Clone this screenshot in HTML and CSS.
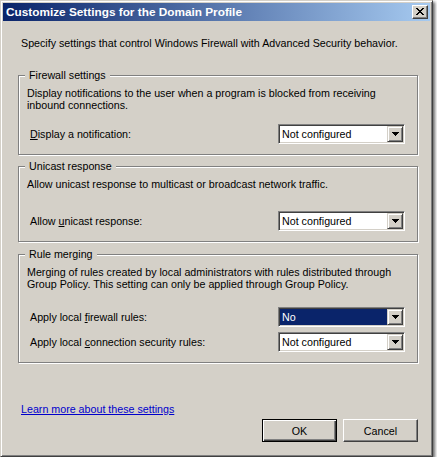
FILE: index.html
```html
<!DOCTYPE html>
<html>
<head>
<meta charset="utf-8">
<title>Customize Settings for the Domain Profile</title>
<link rel="stylesheet" href="styles.css">
</head>
<body>
<div class="window">
  <div class="titlebar">
    <span class="title">Customize Settings for the Domain Profile</span>
    <span class="close"><svg width="8" height="7" viewBox="0 0 8 7" shape-rendering="crispEdges"><path fill="#000" d="M0 0h2v1H0zM6 0h2v1H6zM1 1h2v1H1zM5 1h2v1H5zM2 2h4v1H2zM3 3h2v1H3zM2 4h4v1H2zM1 5h2v1H1zM5 5h2v1H5zM0 6h2v1H0zM6 6h2v1H6z"/></svg></span>
  </div>
  <div class="content">
    <p class="intro">Specify settings that control Windows Firewall with Advanced Security behavior.</p>

    <fieldset class="group g1">
      <legend>Firewall settings</legend>
      <p class="desc">Display notifications to the user when a program is blocked from receiving<br>inbound connections.</p>
      <div class="row r1">
        <span class="label"><u>D</u>isplay a notification:</span>
        <div class="combo"><span class="value">Not configured</span><span class="arrow"><svg width="7" height="4" viewBox="0 0 7 4" shape-rendering="crispEdges"><path fill="#000" d="M0 0h7v1H0zM1 1h5v1H1zM2 2h3v1H2zM3 3h1v1H3z"/></svg></span></div>
      </div>
    </fieldset>

    <fieldset class="group g2">
      <legend>Unicast response</legend>
      <p class="desc">Allow unicast response to multicast or broadcast network traffic.</p>
      <div class="row r2">
        <span class="label">Allow <u>u</u>nicast response:</span>
        <div class="combo"><span class="value">Not configured</span><span class="arrow"><svg width="7" height="4" viewBox="0 0 7 4" shape-rendering="crispEdges"><path fill="#000" d="M0 0h7v1H0zM1 1h5v1H1zM2 2h3v1H2zM3 3h1v1H3z"/></svg></span></div>
      </div>
    </fieldset>

    <fieldset class="group g3">
      <legend>Rule merging</legend>
      <p class="desc">Merging of rules created by local administrators with rules distributed through<br>Group Policy. This setting can only be applied through Group Policy.</p>
      <div class="row r3">
        <span class="label">Apply local <u>f</u>irewall rules:</span>
        <div class="combo"><span class="value selected">No</span><span class="arrow"><svg width="7" height="4" viewBox="0 0 7 4" shape-rendering="crispEdges"><path fill="#000" d="M0 0h7v1H0zM1 1h5v1H1zM2 2h3v1H2zM3 3h1v1H3z"/></svg></span></div>
      </div>
      <div class="row r4">
        <span class="label">Apply local <u>c</u>onnection security rules:</span>
        <div class="combo"><span class="value">Not configured</span><span class="arrow"><svg width="7" height="4" viewBox="0 0 7 4" shape-rendering="crispEdges"><path fill="#000" d="M0 0h7v1H0zM1 1h5v1H1zM2 2h3v1H2zM3 3h1v1H3z"/></svg></span></div>
      </div>
    </fieldset>

    <a class="link" href="#">Learn more about these settings</a>

    <div class="buttons">
      <button class="btn default">OK</button>
      <button class="btn">Cancel</button>
    </div>
  </div>
</div>
</body>
</html>
```
FILE: styles.css
```css
html, body {
  margin: 0;
  padding: 0;
  background: #ffffff;
}

body {
  font-family: "Liberation Sans", Arial, sans-serif;
  font-size: 10.7px;
  color: #000;
}

.window {
  width: 433px;
  height: 457px;
  box-sizing: border-box;
  background: #d4d0c8;
  border: 1px solid;
  border-color: #d4d0c8 #404040 #404040 #d4d0c8;
  box-shadow: inset 1px 1px 0 #ffffff, inset -1px -1px 0 #808080, 2px 2px 3px rgba(0, 0, 0, 0.6);
  padding: 2px;
  display: flex;
  flex-direction: column;
}

.titlebar {
  height: 18px;
  flex: none;
  background: linear-gradient(to right, #0a246a, #a6caf0);
  display: flex;
  align-items: center;
  justify-content: space-between;
  padding: 0 2px 0 3px;
}

.title {
  color: #ffffff;
  font-weight: bold;
  font-size: 11.8px;
  line-height: 14px;
  white-space: nowrap;
}

.close {
  width: 16px;
  height: 14px;
  box-sizing: border-box;
  background: #d4d0c8;
  border: 1px solid;
  border-color: #ffffff #404040 #404040 #ffffff;
  box-shadow: inset -1px -1px 0 #808080;
  display: flex;
  align-items: center;
  justify-content: center;
  padding: 0 1px 1px 0;
}

.close svg { display: block; }

.content {
  flex: 1;
  display: flex;
  flex-direction: column;
  padding: 16px 12px 0 15px;
}

.intro {
  margin: 0 0 20px 3px;
  line-height: 12px;
  white-space: nowrap;
}

.group {
  margin: 0;
  padding: 5px 12px 10px 8px;
  border: 1px solid #808080;
  box-shadow: 1px 1px 0 #ffffff, inset 1px 1px 0 #ffffff;
  min-width: 0;
}

.g2 { margin-top: 5px; }
.g3 { margin-top: 6px; }

.group legend {
  padding: 0 4px;
  margin-left: -2px;
  line-height: 13px;
  background: #d4d0c8;
}

.desc {
  margin: 0;
  line-height: 12px;
  white-space: nowrap;
}

.row {
  display: flex;
  justify-content: space-between;
  align-items: center;
}

.r1 { margin-top: 13px; }
.r2 { margin-top: 21px; }
.r3 { margin-top: 17px; }
.r4 { margin-top: 5px; }

.label {
  padding-left: 3px;
  line-height: 12px;
}

.combo {
  width: 127px;
  height: 20px;
  box-sizing: border-box;
  border: 1px solid;
  border-color: #808080 #ffffff #ffffff #808080;
  box-shadow: inset 1px 1px 0 #404040, inset -1px -1px 0 #d4d0c8;
  background: #ffffff;
  padding: 1px;
  display: flex;
}

.value {
  flex: 1;
  line-height: 16px;
  padding-left: 2px;
  color: #000;
}

.value.selected {
  background: #0a246a;
  color: #ffffff;
}

.arrow {
  width: 16px;
  height: 16px;
  box-sizing: border-box;
  background: #d4d0c8;
  border: 1px solid;
  border-color: #d4d0c8 #404040 #404040 #d4d0c8;
  box-shadow: inset 1px 1px 0 #ffffff, inset -1px -1px 0 #808080;
  display: flex;
  align-items: center;
  justify-content: center;
}

.arrow svg { display: block; }

.link {
  margin: 40px 0 0 3px;
  align-self: flex-start;
  line-height: 12px;
  color: #0000cc;
  text-decoration: underline;
}

.buttons {
  margin-top: 4px;
  display: flex;
  justify-content: flex-end;
  gap: 6px;
}

.btn {
  width: 75px;
  height: 23px;
  box-sizing: border-box;
  margin: 0;
  padding: 0;
  font-family: "Liberation Sans", Arial, sans-serif;
  font-size: 10.7px;
  color: #000;
  background: #d4d0c8;
  border: 1px solid;
  border-color: #ffffff #404040 #404040 #ffffff;
  box-shadow: inset -1px -1px 0 #808080;
  border-radius: 0;
}

.btn.default {
  border-color: #000000;
  box-shadow: inset 1px 1px 0 #ffffff, inset -1px -1px 0 #404040, inset -2px -2px 0 #808080;
}
```
